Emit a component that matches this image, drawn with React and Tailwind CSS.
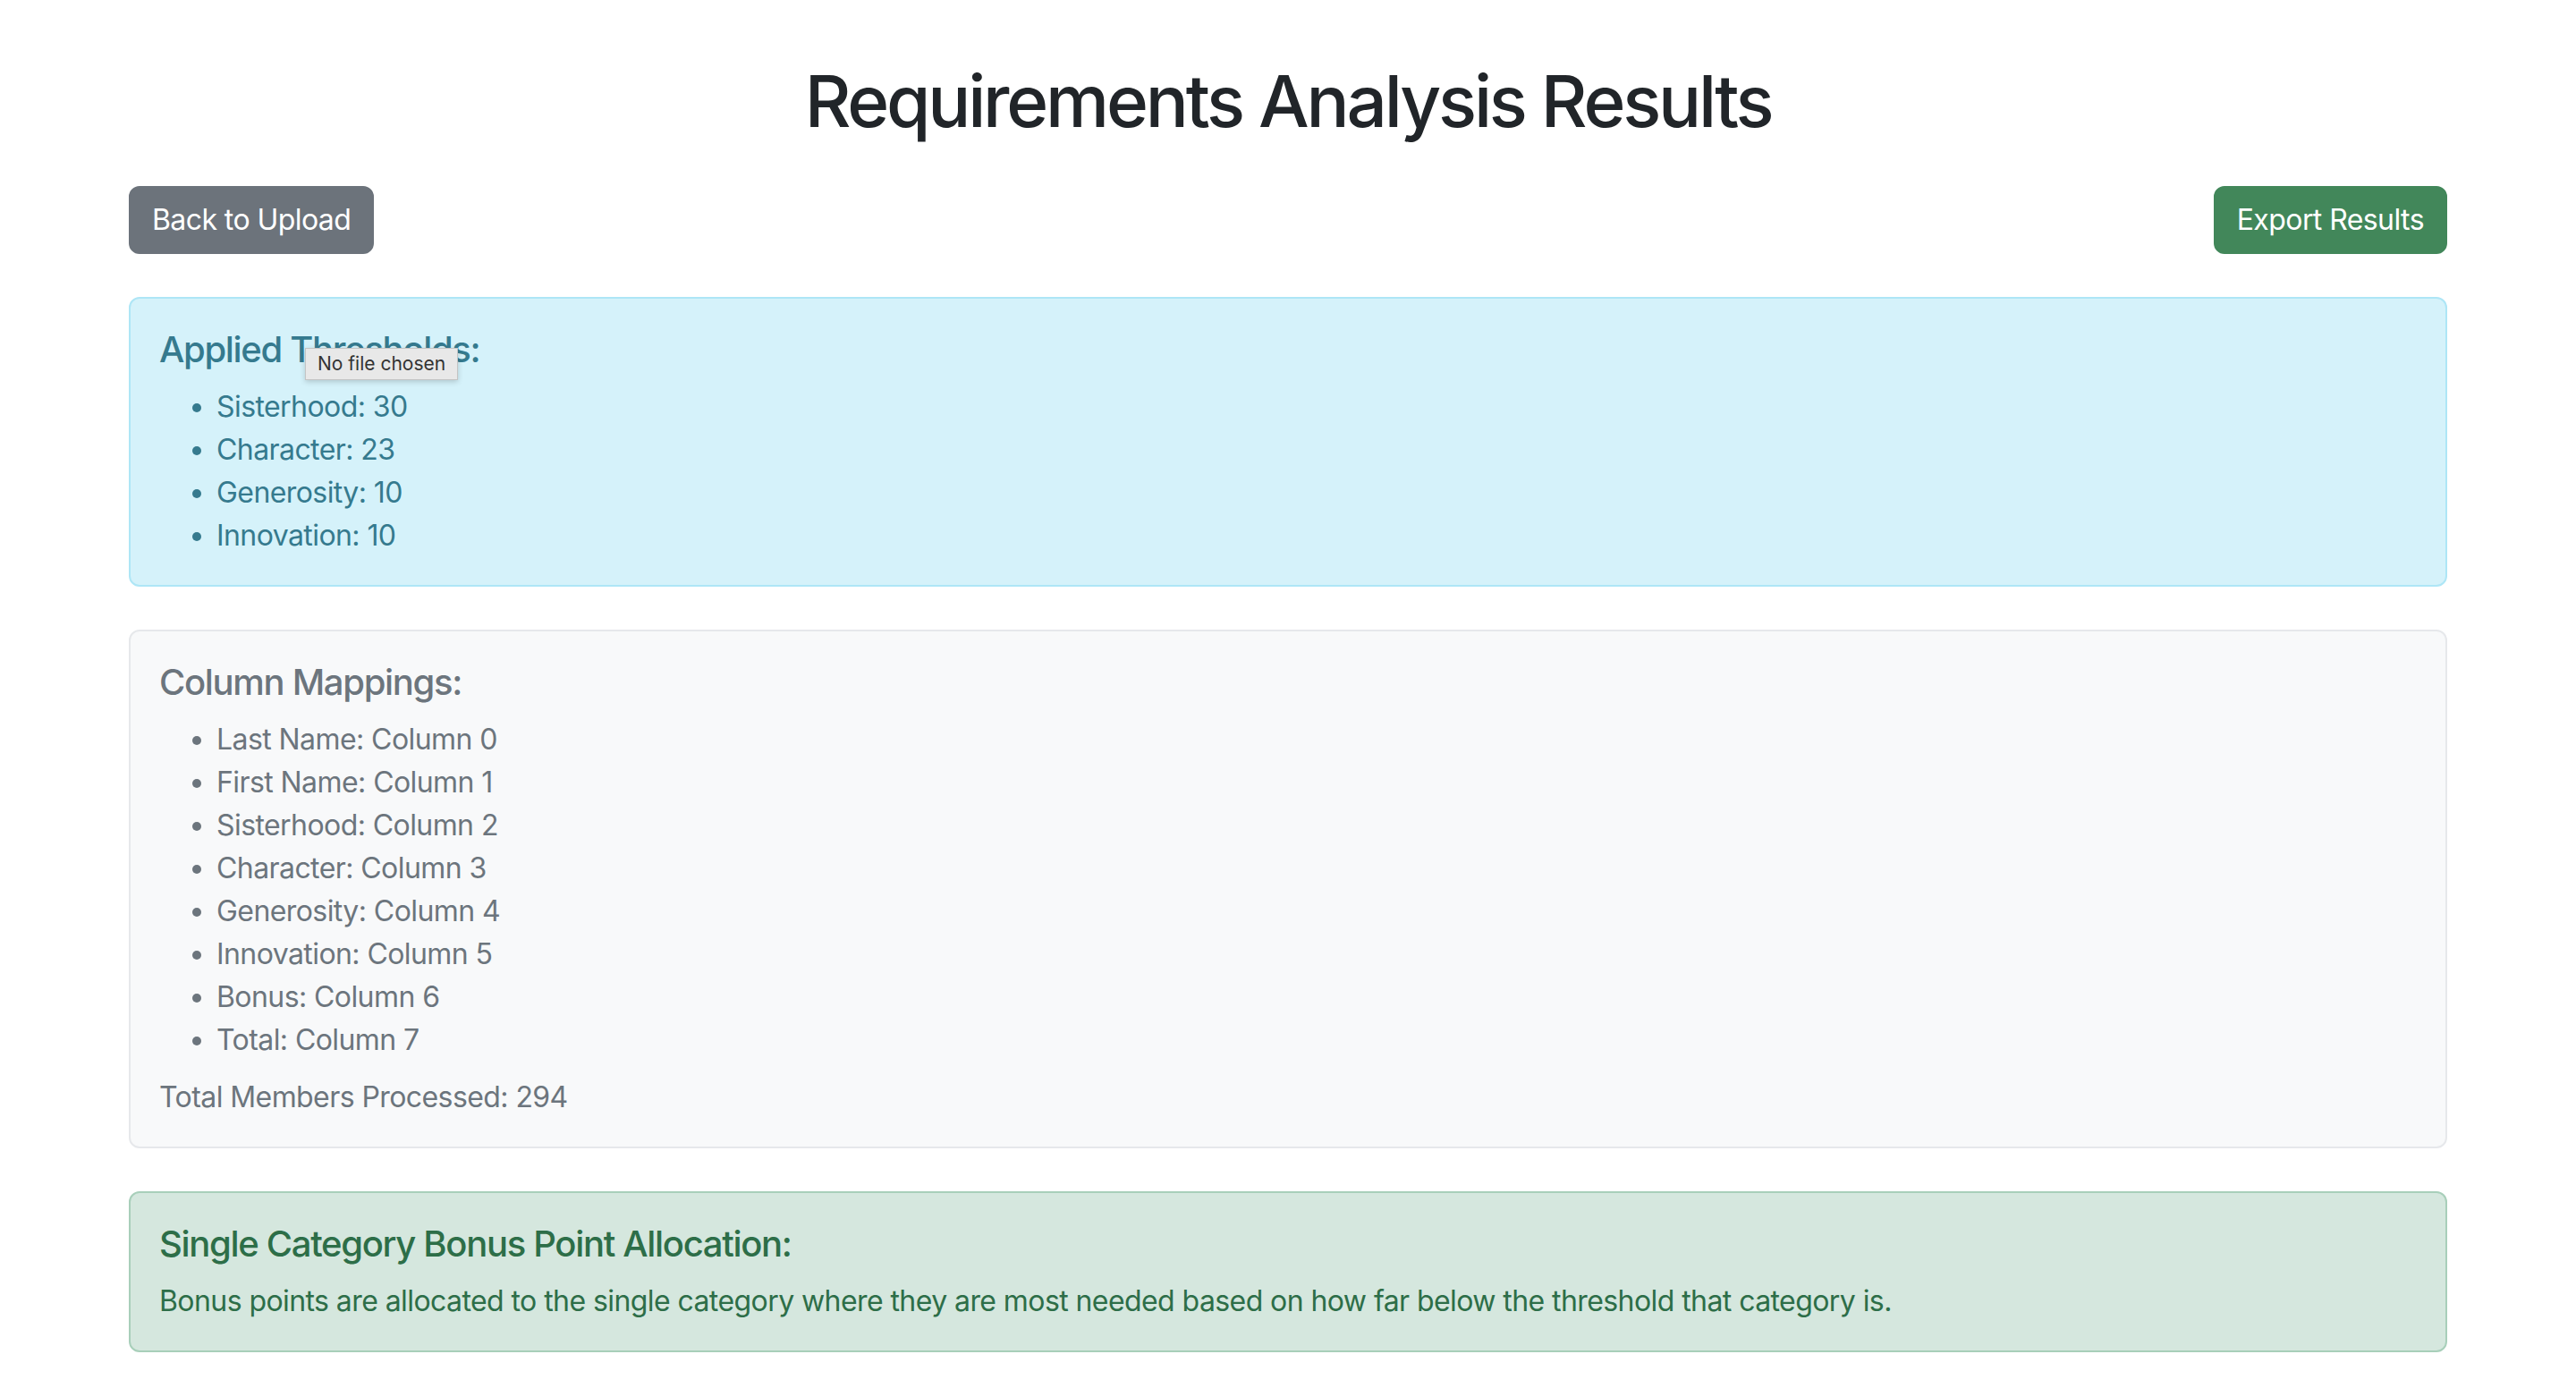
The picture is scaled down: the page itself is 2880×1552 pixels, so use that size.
import React from 'react'

const thresholds = [
  ['Sisterhood', 30],
  ['Character', 23],
  ['Generosity', 10],
  ['Innovation', 10],
]

const mappings = [
  'Last Name',
  'First Name',
  'Sisterhood',
  'Character',
  'Generosity',
  'Innovation',
  'Bonus',
  'Total',
]

export default function App() {
  return (
    <div className="min-h-screen bg-white text-[#212529] font-[Inter,'Noto_Sans',sans-serif] tracking-[-0.036em]">
      <div className="mx-auto max-w-[2640px] px-[24px] pt-[65px] pb-[48px]">
        <h1 className="text-center text-[80px] leading-[96px] font-medium tracking-[-0.04em] mb-[47px]">
          Requirements Analysis Results
        </h1>

        {/* Actions */}
        <div className="flex items-center justify-between mb-[48px]">
          <button className="rounded-[12px] border-2 border-[#6c737b] bg-[#6c737b] px-[24px] py-[12px] text-[32px] leading-[48px] text-white">
            Back to Upload
          </button>
          <button className="rounded-[12px] border-2 border-[#42875a] bg-[#42875a] px-[24px] py-[12px] text-[32px] leading-[48px] text-white">
            Export Results
          </button>
        </div>

        {/* Thresholds */}
        <div className="relative mb-[48px] rounded-[12px] border-2 border-[#aee6f6] bg-[#d5f2fa] px-[32px] pt-[33px] pb-[31px] text-[#357a8e]">
          <h5 className="mb-[16px] text-[40px] leading-[48px] font-medium tracking-[-0.033em]">Applied Thresholds:</h5>
          <ul className="list-disc pl-[64px] text-[32px] leading-[48px]">
            {thresholds.map(([name, value]) => (
              <li key={name}>
                {name}: {value}
              </li>
            ))}
          </ul>
          <div className="absolute left-[195px] top-[55px] flex h-[36px] items-center border border-[#c4c4c4] bg-[#e8e8e8] px-[13px] text-[21px] tracking-normal text-[#333] shadow-[0_2px_6px_rgba(0,0,0,0.18)]">
            No file chosen
          </div>
        </div>

        {/* Column mappings */}
        <div className="mb-[48px] rounded-[12px] border-2 border-[#e6e8eb] bg-[#f8f9fa] px-[32px] pt-[33px] pb-[31px] text-[#6c757d]">
          <h5 className="mb-[16px] text-[40px] leading-[48px] font-medium tracking-[-0.033em]">Column Mappings:</h5>
          <ul className="mb-[16px] list-disc pl-[64px] text-[32px] leading-[48px]">
            {mappings.map((name, i) => (
              <li key={name}>
                {name}: Column {i}
              </li>
            ))}
          </ul>
          <p className="text-[32px] leading-[48px]">Total Members Processed: 294</p>
        </div>

        {/* Bonus info */}
        <div className="rounded-[12px] border-2 border-[#a8cfba] bg-[#d5e7de] px-[32px] pt-[33px] pb-[31px] text-[#2d6e48]">
          <h5 className="mb-[16px] text-[40px] leading-[48px] font-medium tracking-[-0.033em]">
            Single Category Bonus Point Allocation:
          </h5>
          <p className="text-[32px] leading-[48px]">
            Bonus points are allocated to the single category where they are most needed based on how far below the threshold that category is.
          </p>
        </div>
      </div>
    </div>
  )
}
